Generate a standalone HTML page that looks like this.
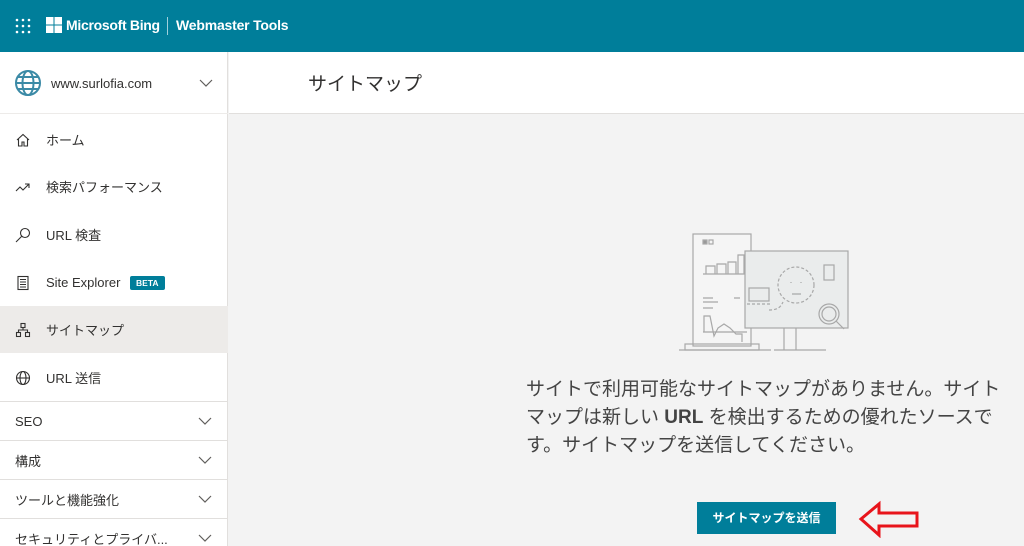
<!DOCTYPE html><html><head><meta charset="utf-8"><style>
*{box-sizing:border-box;margin:0;padding:0}
html,body{width:1024px;height:546px;overflow:hidden}
body{background:#f3f3f3;font-family:"Liberation Sans","Noto Sans CJK JP",sans-serif;color:#323130;position:relative}
.top{position:absolute;left:0;top:0;width:1024px;height:52px;background:#007e9a;color:#fff}
.side{position:absolute;left:0;top:52px;width:228px;height:494px;background:#fff;border-right:1px solid #e1dfdd}
.item{position:absolute;left:0;width:228px;height:47px;font-size:13px;display:flex;align-items:center}
.item svg{position:absolute;left:15px}
.item span{position:absolute;left:46px}
.sec{position:absolute;left:0;width:228px;height:39px;border-top:1px solid #e1dfdd;font-size:13px;display:flex;align-items:center;padding-left:15px}
.sec svg{position:absolute;right:16px}
</style></head><body>
<div class="top">
<svg style="position:absolute;left:15px;top:18px" width="16" height="16"><g fill="#fff"><circle cx="2" cy="2" r="1.3"/><circle cx="8" cy="2" r="1.3"/><circle cx="14" cy="2" r="1.3"/><circle cx="2" cy="8" r="1.3"/><circle cx="8" cy="8" r="1.3"/><circle cx="14" cy="8" r="1.3"/><circle cx="2" cy="14" r="1.3"/><circle cx="8" cy="14" r="1.3"/><circle cx="14" cy="14" r="1.3"/></g></svg>
<svg style="position:absolute;left:46px;top:17px" width="16" height="16"><g fill="#fff"><rect width="7.5" height="7.5"/><rect x="8.5" width="7.5" height="7.5"/><rect y="8.5" width="7.5" height="7.5"/><rect x="8.5" y="8.5" width="7.5" height="7.5"/></g></svg>
<div style="position:absolute;left:66px;top:17px;font-size:14px;font-weight:bold;letter-spacing:-0.3px">Microsoft Bing</div>
<div style="position:absolute;left:167px;top:17px;width:1px;height:18px;background:#9fd0dc"></div>
<div style="position:absolute;left:176px;top:17px;font-size:14px;font-weight:bold;letter-spacing:-0.2px">Webmaster Tools</div>
</div>
<div class="side">
<div style="position:absolute;left:0;top:0;width:228px;height:62px;border-bottom:1px solid #edebe9">
<svg style="position:absolute;left:14px;top:17px" width="28" height="28" viewBox="0 0 28 28" fill="none" stroke="#3b8aa6" stroke-width="2"><circle cx="14" cy="14" r="12"/><ellipse cx="14" cy="14" rx="5.5" ry="12"/><path d="M2 14h24M4 8h20M4 20h20"/></svg>
<div style="position:absolute;left:51px;top:24px;font-size:13px">www.surlofia.com</div>
<svg style="position:absolute;left:199px;top:27px" width="14" height="8" fill="none" stroke="#605e5c" stroke-width="1.2"><path d="M1 1l6 6 6-6"/></svg>
</div>
<div class="item" style="top:64px"><svg width="16" height="16" fill="none" stroke="#323130" stroke-width="1.1"><path d="M2 8L8 2.5 14 8M3.5 7v7h3.5v-4h2v4h3.5V7"/></svg><span>ホーム</span></div>
<div class="item" style="top:111px"><svg width="16" height="16" fill="none" stroke="#323130" stroke-width="1.1"><path d="M1 12l4-4 3 3 6-6M10 5h4v4"/></svg><span>検索パフォーマンス</span></div>
<div class="item" style="top:159px"><svg width="16" height="16" fill="none" stroke="#323130" stroke-width="1.1"><circle cx="10" cy="6" r="4.5"/><path d="M7 9l-6 6"/></svg><span>URL 検査</span></div>
<div class="item" style="top:207px"><svg width="16" height="16" fill="none" stroke="#323130" stroke-width="1.1"><rect x="3" y="1.5" width="10" height="13"/><path d="M5 4.5h6M5 7h6M5 9.5h6M5 12h6"/></svg><span>Site Explorer <b style="display:inline-block;margin-left:6px;background:#007e9a;color:#fff;font-size:8.5px;padding:2px 6px;border-radius:2px;vertical-align:1px">BETA</b></span></div>
<div class="item" style="top:254px;background:#edebe9"><svg width="16" height="16" fill="none" stroke="#323130" stroke-width="1.1"><rect x="6" y="1.5" width="4" height="4"/><rect x="1.5" y="10.5" width="4" height="4"/><rect x="10.5" y="10.5" width="4" height="4"/><path d="M8 5.5v2.5M3.5 10.5V8h9v2.5"/></svg><span>サイトマップ</span></div>
<div class="item" style="top:302px"><svg width="16" height="16" fill="none" stroke="#323130" stroke-width="1.1"><circle cx="8" cy="8" r="6.5"/><ellipse cx="8" cy="8" rx="3" ry="6.5"/><path d="M1.5 8h13"/></svg><span>URL 送信</span></div>
<div class="sec" style="top:349px">SEO<svg width="14" height="8" fill="none" stroke="#605e5c" stroke-width="1.2"><path d="M1 1l6 6 6-6"/></svg></div>
<div class="sec" style="top:388px">構成<svg width="14" height="8" fill="none" stroke="#605e5c" stroke-width="1.2"><path d="M1 1l6 6 6-6"/></svg></div>
<div class="sec" style="top:427px">ツールと機能強化<svg width="14" height="8" fill="none" stroke="#605e5c" stroke-width="1.2"><path d="M1 1l6 6 6-6"/></svg></div>
<div class="sec" style="top:466px">セキュリティとプライバ...<svg width="14" height="8" fill="none" stroke="#605e5c" stroke-width="1.2"><path d="M1 1l6 6 6-6"/></svg></div>
</div>
<div style="position:absolute;left:229px;top:52px;width:795px;height:62px;background:#fff;border-bottom:1px solid #e1dfdd">
<div style="position:absolute;left:79px;top:17px;font-size:19px">サイトマップ</div></div>
<svg style="position:absolute;left:679px;top:232px" width="175" height="120" viewBox="0 0 175 120" fill="none" stroke="#a8a8a8" stroke-width="1.2">
<rect x="14" y="2" width="58" height="112" fill="#f5f5f5"/><rect x="24" y="8" width="4" height="4" fill="#999"/><rect x="30" y="8" width="4" height="4"/>
<path d="M27 42h9v-8h-9zM38 42h9v-10h-9zM49 42h8v-12h-8zM59 42h6v-19h-6zM24 42h44M24 66h10M24 70h15M24 76h10M55 66h6"/>
<path d="M25 100V84h6l4 20 4-8 6-4 6 4 6 6v-0h6v8"/><path d="M24 100h44"/>
<rect x="6" y="112" width="74" height="6"/><path d="M0 118h92"/>
<rect x="66" y="19" width="103" height="77" fill="#eaecec"/>
<path d="M105 96v22M117 96v22M95 118h52"/>
<circle cx="117" cy="53" r="18" stroke-dasharray="3 2"/><path d="M112 50v1M122 50v1M113 62h9"/>
<rect x="70" y="56" width="20" height="13"/><path d="M68 72h24M90 78c10 0 12-4 14-8" stroke-dasharray="3 2"/>
<rect x="145" y="33" width="10" height="15"/>
<circle cx="150" cy="82" r="10"/><circle cx="150" cy="82" r="7"/><path d="M157 89l8 8"/>
</svg>
<div style="position:absolute;left:526px;top:376px;width:486px;font-size:19px;line-height:28px;color:#444;text-align:left">サイトで利用可能なサイトマップがありません。サイトマップは新しい <b>URL</b> を検出するための優れたソースです。サイトマップを送信してください。</div>
<div style="position:absolute;left:697px;top:502px;width:139px;height:32px;background:#007e9a;color:#fff;font-size:12px;font-weight:bold;text-align:center;line-height:32px">サイトマップを送信</div>
<svg style="position:absolute;left:858px;top:500px" width="64" height="38"><path d="M3 19L21 4v9h38v13H21v9z" fill="none" stroke="#e8141b" stroke-width="3"/></svg>
</body></html>
